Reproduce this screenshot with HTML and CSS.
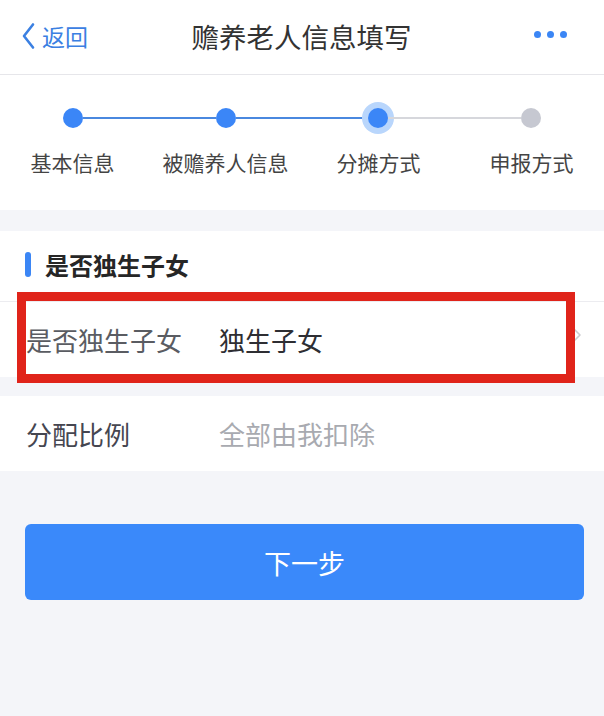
FILE: index.html
```html
<!DOCTYPE html>
<html lang="zh-CN">
<head>
<meta charset="utf-8">
<title>赡养老人信息填写</title>
<link rel="stylesheet" href="styles.css">
</head>
<body>
<div class="page">
  <header class="nav">
    <div class="nav-back">
      <svg class="back-icon" width="14" height="28" viewBox="0 0 14 28"><path d="M12 2.5 L3 14 L12 25.5" fill="none" stroke="#3b80e2" stroke-width="2.6" stroke-linecap="round" stroke-linejoin="round"/></svg>
      <span>返回</span>
    </div>
    <div class="nav-title">赡养老人信息填写</div>
    <div class="nav-more"><i></i><i></i><i></i></div>
  </header>

  <section class="steps">
    <div class="step-track">
      <span class="dot done"></span>
      <span class="line done"></span>
      <span class="dot done"></span>
      <span class="line done"></span>
      <span class="dot active"></span>
      <span class="line"></span>
      <span class="dot"></span>
    </div>
    <div class="step-labels">
      <span>基本信息</span>
      <span>被赡养人信息</span>
      <span>分摊方式</span>
      <span>申报方式</span>
    </div>
  </section>

  <section class="card">
    <div class="card-title"><span class="bar"></span>是否独生子女</div>
    <div class="row row-first">
      <span class="row-label">是否独生子女</span>
      <span class="row-value">独生子女</span>
      <svg class="row-arrow" width="9" height="14" viewBox="0 0 9 14"><path d="M1.5 1.5 L7 7 L1.5 12.5" fill="none" stroke="#cbccd0" stroke-width="1.6" stroke-linecap="round" stroke-linejoin="round"/></svg>
      <div class="highlight"></div>
    </div>
  </section>

  <section class="card card-second">
    <div class="row">
      <span class="row-label dark">分配比例</span>
      <span class="row-value placeholder">全部由我扣除</span>
    </div>
  </section>

  <div class="actions">
    <button class="btn-next" type="button">下一步</button>
  </div>
</div>
</body>
</html>
```
FILE: styles.css
```css
* { box-sizing: border-box; }
html, body { margin: 0; padding: 0; }
body {
  background: #f4f5f9;
  font-family: "Noto Sans CJK SC", "Noto Sans", sans-serif;
  width: 604px;
  height: 716px;
  overflow: hidden;
}
.page { width: 604px; }

.nav {
  height: 75px;
  background: #fff;
  border-bottom: 1px solid #e6e6ea;
  display: flex;
  align-items: center;
  position: relative;
  padding: 0 22px 2px 21px;
}
.nav-back {
  display: flex;
  align-items: center;
  gap: 7px;
  color: #3b80e2;
  font-size: 23px;
  width: 120px;
}
.back-icon { display: block; }
.nav-title {
  flex: 1;
  text-align: center;
  font-size: 27.5px;
  color: #333;
  letter-spacing: 0;
}
.nav-more {
  width: 120px;
  display: flex;
  justify-content: flex-end;
  gap: 6px;
  padding-right: 15px;
  padding-bottom: 4px;
}
.nav-more i {
  width: 7px;
  height: 7px;
  border-radius: 50%;
  background: #3b86f5;
  display: block;
}

.steps {
  background: #fff;
  height: 135px;
  padding-top: 33px;
}
.step-track {
  display: flex;
  align-items: center;
  padding: 0 63px;
  height: 20px;
}
.dot {
  width: 20px;
  height: 20px;
  border-radius: 50%;
  background: #c6c8d1;
  flex: none;
}
.dot.done, .dot.active { background: #3b86f7; }
.dot.active { box-shadow: 0 0 0 6px #b9d6fc; }
.line {
  flex: 1;
  height: 2px;
  background: #d6d7dc;
}
.line.done { background: #4a88df; }
.step-labels {
  display: grid;
  grid-template-columns: repeat(4, 153px);
  margin-left: -4px;
  margin-top: 19px;
  font-size: 21px;
  color: #444;
  line-height: 30px;
}
.step-labels span { text-align: center; white-space: nowrap; }

.card {
  background: #fff;
  margin-top: 21px;
}
.card-title {
  height: 71px;
  display: flex;
  align-items: center;
  padding-left: 25px;
  padding-bottom: 4px;
  font-size: 24px;
  font-weight: bold;
  color: #262626;
  border-bottom: 1px solid #ececf0;
}
.bar {
  width: 6px;
  height: 25px;
  border-radius: 3px;
  background: #3b86f5;
  margin-right: 14px;
}
.row {
  height: 75px;
  display: flex;
  align-items: center;
  padding: 0 22px 0 26px;
  font-size: 26px;
  position: relative;
}
.row-label {
  width: 193px;
  color: #5a5c62;
}
.row-label.dark { color: #454650; }
.row-value { flex: 1; color: #2e2e33; }
.row-value.placeholder { color: #a8aab0; }
.row-arrow { display: block; margin-top: -10px; }
.highlight {
  position: absolute;
  left: 17px;
  top: -10px;
  width: 558px;
  height: 91px;
  border: 9px solid #e0241a;
  pointer-events: none;
}
.card-second { margin-top: 19px; }

.actions {
  padding: 53px 20px 0 25px;
}
.btn-next {
  width: 100%;
  height: 76px;
  border: none;
  border-radius: 6px;
  background: #3a89fa;
  color: #fff;
  font-family: inherit;
  font-size: 27px;
}
```
